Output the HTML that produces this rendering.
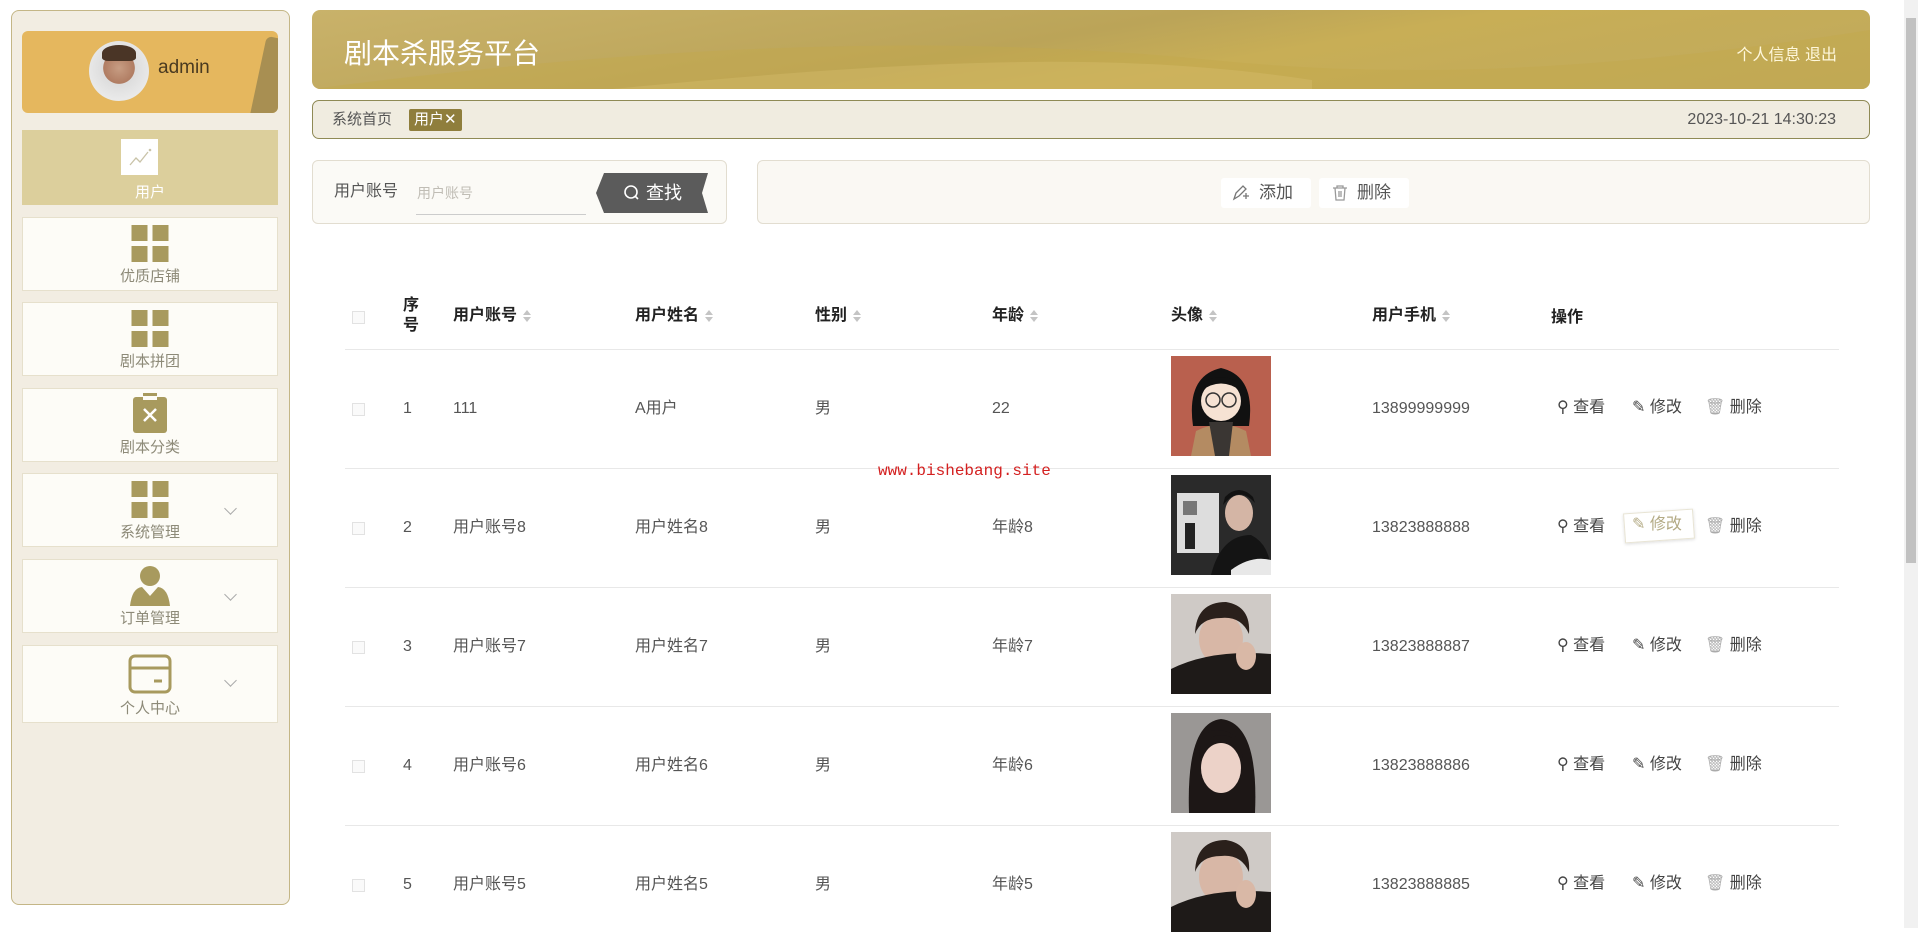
<!DOCTYPE html>
<html><head><meta charset="utf-8"><style>
*{box-sizing:border-box;margin:0;padding:0}
body{width:1918px;height:928px;overflow:hidden;background:#fff;font-family:"Liberation Sans","Noto Sans CJK SC",sans-serif;position:relative;color:#333}
.abs{position:absolute}
.side{left:11px;top:10px;width:279px;height:895px;background:#f2ede2;border:1px solid #c4b686;border-radius:8px}
.card{left:22px;top:31px;width:256px;height:82px;background:#e5b75e;border-radius:6px;overflow:hidden}
.menu{left:22px;width:256px;height:74px;background:#fdfcf7;border:1px solid #e6e0cc;text-align:center;color:#8d8a78;font-size:15px}
.menu .lbl{position:absolute;left:0;right:0;bottom:4px}
.menu .ic{position:absolute;left:50%;transform:translateX(-50%);top:7px}
.chev{position:absolute;right:42px;top:30px;width:9px;height:9px;border-right:1.3px solid #aaa;border-bottom:1.3px solid #aaa;transform:rotate(45deg)}
.hdr{left:312px;top:10px;width:1558px;height:79px;border-radius:8px;background:linear-gradient(170deg,#c9b26a 0%,#bba458 45%,#c8ae56 60%,#bfa95d 100%);overflow:hidden}
.bc{left:312px;top:100px;width:1558px;height:39px;border:1px solid #8f8a55;border-radius:7px;background:#f0ece0}
.sbox{left:312px;top:160px;width:415px;height:64px;border:1px solid #e2ddd0;border-radius:6px;background:#fbfaf6}
.abox{left:757px;top:160px;width:1113px;height:64px;border:1px solid #e2ddd0;border-radius:6px;background:#faf8f3}
.th{font-size:16px;font-weight:bold;color:#222;line-height:20px;top:306px}
.sort{display:inline-block;vertical-align:middle;margin-left:6px;width:8px;height:14px;position:relative}
.sort:before{content:"";position:absolute;left:0;top:1px;border:4px solid transparent;border-bottom:5px solid #c4c4c4;border-top:0}
.sort:after{content:"";position:absolute;left:0;top:8px;border:4px solid transparent;border-top:5px solid #c4c4c4;border-bottom:0}
.line{left:345px;width:1494px;height:1px;background:#e8e8e8}
.td{font-size:16px;color:#555;line-height:20px;height:20px}
.cb{width:13px;height:13px;border:1px solid #e2e2e2;background:#fafafa}
.op{font-size:16px;color:#444;line-height:20px;height:20px}
.hd{line-height:20px}
</style></head><body>
<div class="abs side"></div>
<div class="abs card">
 <div class="abs" style="left:235px;top:8px;width:40px;height:90px;background:#a88f52;transform:rotate(12deg);border-radius:6px"></div>
 <div class="abs" style="left:67px;top:10px;width:60px;height:60px;border-radius:50%;background:radial-gradient(circle at 50% 45%,#c79d83 0,#b07c62 35%,#ddd 36%,#e9e9e9 70%)"></div>
 <div class="abs" style="left:80px;top:14px;width:34px;height:16px;border-radius:50% 50% 20% 20%;background:#4a3526"></div>
 <div class="abs" style="left:136px;top:26px;font-size:19px;color:#4a3a20">admin</div>
</div>
<div class="abs" style="left:22px;top:130px;width:256px;height:75px;background:#dccf9c"></div>
<div class="abs" style="left:121px;top:139px;width:37px;height:36px;background:#fff"><svg width="37" height="36"><path d="M9 26 L15 19 L19 23 L27 13" stroke="#c9c3a8" stroke-width="1.3" fill="none"/><circle cx="29" cy="11" r="1.3" fill="#c9c3a8"/></svg></div>
<div class="abs" style="left:22px;top:181px;width:256px;text-align:center;color:#fff;font-size:15px">用户</div>

<div class="abs menu" style="top:217px"><svg class="ic" width="37" height="37"><rect x="0" y="0" width="16" height="16" fill="#a89a5e"/><rect x="21" y="0" width="16" height="16" fill="#a89a5e"/><rect x="0" y="21" width="16" height="16" fill="#a89a5e"/><rect x="21" y="21" width="16" height="16" fill="#a89a5e"/></svg><div class="lbl">优质店铺</div></div>
<div class="abs menu" style="top:302px"><svg class="ic" width="37" height="37"><rect x="0" y="0" width="16" height="16" fill="#a89a5e"/><rect x="21" y="0" width="16" height="16" fill="#a89a5e"/><rect x="0" y="21" width="16" height="16" fill="#a89a5e"/><rect x="21" y="21" width="16" height="16" fill="#a89a5e"/></svg><div class="lbl">剧本拼团</div></div>
<div class="abs menu" style="top:388px"><svg class="ic" width="34" height="40" style="top:4px"><rect x="10" y="0" width="14" height="6" fill="#a89a5e"/><rect x="0" y="4" width="34" height="36" rx="3" fill="#a89a5e"/><rect x="10" y="3" width="14" height="4" fill="#fdfcf7"/><path d="M11 16 L23 28 M23 16 L11 28" stroke="#fff" stroke-width="2.5"/></svg><div class="lbl">剧本分类</div></div>
<div class="abs menu" style="top:473px"><svg class="ic" width="37" height="37"><rect x="0" y="0" width="16" height="16" fill="#a89a5e"/><rect x="21" y="0" width="16" height="16" fill="#a89a5e"/><rect x="0" y="21" width="16" height="16" fill="#a89a5e"/><rect x="21" y="21" width="16" height="16" fill="#a89a5e"/></svg><div class="lbl">系统管理</div><div class="chev"></div></div>
<div class="abs menu" style="top:559px"><svg class="ic" width="40" height="40" style="top:6px"><circle cx="20" cy="10" r="10" fill="#a89a5e"/><path d="M0 40 Q2 22 12 21 L20 30 L28 21 Q38 22 40 40 Z" fill="#a89a5e"/></svg><div class="lbl">订单管理</div><div class="chev"></div></div>
<div class="abs menu" style="top:645px;height:78px"><svg class="ic" width="44" height="40" style="top:8px"><rect x="2" y="2" width="40" height="36" rx="5" fill="none" stroke="#a89a5e" stroke-width="3"/><line x1="2" y1="14" x2="42" y2="14" stroke="#a89a5e" stroke-width="3"/><line x1="26" y1="27" x2="34" y2="27" stroke="#a89a5e" stroke-width="3"/></svg><div class="lbl">个人中心</div><div class="chev"></div></div>

<div class="abs hdr">
 <svg class="abs" style="left:0;top:0" width="1558" height="79"><path d="M0 79 C300 40 600 20 900 50 C1100 70 1300 60 1558 20 L1558 79 Z" fill="#c3a84c" opacity=".45"/><path d="M300 79 C600 50 800 40 1000 70 L1000 79 Z" fill="#d6bf6e" opacity=".4"/></svg>
 <div class="abs" style="left:32px;top:22px;font-size:28px;color:#fff">剧本杀服务平台</div>
 <div class="abs" style="right:33px;top:31px;font-size:16px;color:#fff8dc">个人信息 退出</div>
</div>
<div class="abs bc">
 <div class="abs hd" style="left:19px;top:9px;font-size:15px;color:#555">系统首页</div>
 <div class="abs" style="left:96px;top:8px;height:22px;padding:0 5px;background:#8f7e3c;color:#fff;font-size:15px;line-height:22px;border-radius:2px">用户✕</div>
 <div class="abs hd" style="right:33px;top:9px;font-size:16px;color:#555">2023-10-21 14:30:23</div>
</div>
<div class="abs sbox">
 <div class="abs hd" style="left:21px;top:21px;font-size:16px;color:#555">用户账号</div>
 <div class="abs hd" style="left:104px;top:22px;font-size:14px;color:#c0bdb5">用户账号</div>
 <div class="abs" style="left:103px;top:53px;width:170px;height:1px;background:#ccc"></div>
 <svg class="abs" style="left:283px;top:12px" width="112" height="40"><path d="M8 0 H112 L106 20 L112 40 H8 L0 20 Z" fill="#5b5b5b"/><circle cx="35" cy="19" r="6" stroke="#fff" stroke-width="1.6" fill="none"/><line x1="39" y1="23" x2="42" y2="26" stroke="#fff" stroke-width="1.6"/><text x="50" y="26" fill="#fff" font-size="18" font-family="Liberation Sans,Noto Sans CJK SC,sans-serif">查找</text></svg>
</div>
<div class="abs abox">
 <div class="abs" style="left:463px;top:17px;width:90px;height:30px;background:#fff;border-radius:3px;font-size:17px;color:#555;line-height:30px;padding-left:38px">添加</div>
 <svg class="abs" style="left:474px;top:24px" width="18" height="16"><path d="M2 14 L4 8 L11 1 L14 4 L7 11 Z" stroke="#777" stroke-width="1.3" fill="none"/><path d="M11 11 H17 M14 8 V14" stroke="#777" stroke-width="1.3"/></svg>
 <div class="abs" style="left:561px;top:17px;width:90px;height:30px;background:#fff;border-radius:3px;font-size:17px;color:#555;line-height:30px;padding-left:38px">删除</div>
 <svg class="abs" style="left:574px;top:23px" width="16" height="18"><path d="M1 4 H15 M5 4 V2 H11 V4 M3 4 L4 16 H12 L13 4 M7 7 V13 M9 7 V13" stroke="#999" stroke-width="1.3" fill="none"/></svg>
</div>

<div class="abs cb" style="left:352px;top:311px"></div>
<div class="abs th" style="left:403px;top:296px">序<br>号</div>
<div class="abs th" style="left:453px">用户账号<span class="sort"></span></div>
<div class="abs th" style="left:635px">用户姓名<span class="sort"></span></div>
<div class="abs th" style="left:815px">性别<span class="sort"></span></div>
<div class="abs th" style="left:992px">年龄<span class="sort"></span></div>
<div class="abs th" style="left:1171px">头像<span class="sort"></span></div>
<div class="abs th" style="left:1372px">用户手机<span class="sort"></span></div>
<div class="abs th" style="left:1551px;top:308px">操作</div>
<div class="abs line" style="top:349px"></div>

<div class="abs line" style="top:468px"></div>
<div class="abs line" style="top:587px"></div>
<div class="abs line" style="top:706px"></div>
<div class="abs line" style="top:825px"></div>

<!-- row 1 -->
<div class="abs cb" style="left:352px;top:403px"></div>
<div class="abs td" style="left:403px;top:399px">1</div>
<div class="abs td" style="left:453px;top:399px">111</div>
<div class="abs td" style="left:635px;top:399px">A用户</div>
<div class="abs td" style="left:815px;top:399px">男</div>
<div class="abs td" style="left:992px;top:399px">22</div>
<div class="abs td" style="left:1372px;top:399px">13899999999</div>
<svg class="abs" style="left:1171px;top:356px" width="100" height="100"><rect width="100" height="100" fill="#b9604e"/><path d="M22 70 Q15 20 50 12 Q85 20 78 70 Z" fill="#111"/><ellipse cx="50" cy="45" rx="20" ry="20" fill="#f6e2d3"/><path d="M30 35 Q50 20 70 35 L70 28 Q50 14 30 28Z" fill="#111"/><circle cx="42" cy="44" r="7" fill="none" stroke="#333" stroke-width="1.5"/><circle cx="58" cy="44" r="7" fill="none" stroke="#333" stroke-width="1.5"/><path d="M20 100 L25 75 Q50 62 75 75 L80 100Z" fill="#b48b62"/><path d="M38 66 H62 L58 100 H44Z" fill="#3a3633"/></svg>
<div class="abs op" style="left:1557px;top:398px">⚲ 查看</div>
<div class="abs op" style="left:1632px;top:398px">✎ 修改</div>
<div class="abs op" style="left:1705px;top:398px"><span style="color:#aaa">🗑</span> 删除</div>

<!-- row 2 -->
<div class="abs cb" style="left:352px;top:522px"></div>
<div class="abs td" style="left:403px;top:518px">2</div>
<div class="abs td" style="left:453px;top:518px">用户账号8</div>
<div class="abs td" style="left:635px;top:518px">用户姓名8</div>
<div class="abs td" style="left:815px;top:518px">男</div>
<div class="abs td" style="left:992px;top:518px">年龄8</div>
<div class="abs td" style="left:1372px;top:518px">13823888888</div>
<svg class="abs" style="left:1171px;top:475px" width="100" height="100"><rect width="100" height="100" fill="#2a2a2a"/><rect x="6" y="18" width="42" height="60" fill="#ddd"/><rect x="12" y="26" width="14" height="14" fill="#777"/><rect x="14" y="48" width="10" height="26" fill="#222"/><ellipse cx="68" cy="38" rx="14" ry="18" fill="#d4b5a5"/><path d="M52 30 Q68 10 84 28 L82 22 Q68 8 54 22Z" fill="#111"/><path d="M40 100 Q50 60 80 60 Q100 70 100 100Z" fill="#141414"/><path d="M60 95 Q80 80 100 85 L100 100 H60Z" fill="#e8e8e8"/></svg>
<div class="abs op" style="left:1557px;top:517px">⚲ 查看</div>
<div class="abs" style="left:1624px;top:511px;width:70px;height:30px;border:1px solid #e8e4d4;background:#fff;transform:rotate(-4deg);box-shadow:0 1px 3px #ddd"></div>
<div class="abs op" style="left:1632px;top:515px;color:#b3aa84">✎ 修改</div>
<div class="abs op" style="left:1705px;top:517px"><span style="color:#aaa">🗑</span> 删除</div>

<!-- row 3 -->
<div class="abs cb" style="left:352px;top:641px"></div>
<div class="abs td" style="left:403px;top:637px">3</div>
<div class="abs td" style="left:453px;top:637px">用户账号7</div>
<div class="abs td" style="left:635px;top:637px">用户姓名7</div>
<div class="abs td" style="left:815px;top:637px">男</div>
<div class="abs td" style="left:992px;top:637px">年龄7</div>
<div class="abs td" style="left:1372px;top:637px">13823888887</div>
<svg class="abs" style="left:1171px;top:594px" width="100" height="100"><rect width="100" height="100" fill="#cfcac6"/><ellipse cx="50" cy="45" rx="22" ry="26" fill="#d8b7a6"/><path d="M24 40 Q25 8 55 8 Q80 12 78 40 Q70 22 50 24 Q30 24 24 40Z" fill="#2a201b"/><path d="M0 100 L0 75 Q40 55 100 60 L100 100Z" fill="#1e1a18"/><ellipse cx="75" cy="62" rx="10" ry="14" fill="#d9b8a6"/></svg>
<div class="abs op" style="left:1557px;top:636px">⚲ 查看</div>
<div class="abs op" style="left:1632px;top:636px">✎ 修改</div>
<div class="abs op" style="left:1705px;top:636px"><span style="color:#aaa">🗑</span> 删除</div>

<!-- row 4 -->
<div class="abs cb" style="left:352px;top:760px"></div>
<div class="abs td" style="left:403px;top:756px">4</div>
<div class="abs td" style="left:453px;top:756px">用户账号6</div>
<div class="abs td" style="left:635px;top:756px">用户姓名6</div>
<div class="abs td" style="left:815px;top:756px">男</div>
<div class="abs td" style="left:992px;top:756px">年龄6</div>
<div class="abs td" style="left:1372px;top:756px">13823888886</div>
<svg class="abs" style="left:1171px;top:713px" width="100" height="100"><rect width="100" height="100" fill="#9a9795"/><path d="M18 100 Q15 10 50 6 Q88 10 84 100Z" fill="#1d1716"/><ellipse cx="50" cy="55" rx="20" ry="25" fill="#ecd2c8"/><path d="M28 45 Q35 22 50 22 Q68 22 72 45 L72 32 Q60 14 40 18 Q28 26 28 45Z" fill="#1d1716"/></svg>
<div class="abs op" style="left:1557px;top:755px">⚲ 查看</div>
<div class="abs op" style="left:1632px;top:755px">✎ 修改</div>
<div class="abs op" style="left:1705px;top:755px"><span style="color:#aaa">🗑</span> 删除</div>

<!-- row 5 -->
<div class="abs cb" style="left:352px;top:879px"></div>
<div class="abs td" style="left:403px;top:875px">5</div>
<div class="abs td" style="left:453px;top:875px">用户账号5</div>
<div class="abs td" style="left:635px;top:875px">用户姓名5</div>
<div class="abs td" style="left:815px;top:875px">男</div>
<div class="abs td" style="left:992px;top:875px">年龄5</div>
<div class="abs td" style="left:1372px;top:875px">13823888885</div>
<svg class="abs" style="left:1171px;top:832px" width="100" height="100"><rect width="100" height="100" fill="#cfcac6"/><ellipse cx="50" cy="45" rx="22" ry="26" fill="#d8b7a6"/><path d="M24 40 Q25 8 55 8 Q80 12 78 40 Q70 22 50 24 Q30 24 24 40Z" fill="#2a201b"/><path d="M0 100 L0 75 Q40 55 100 60 L100 100Z" fill="#1e1a18"/><ellipse cx="75" cy="62" rx="10" ry="14" fill="#d9b8a6"/></svg>
<div class="abs op" style="left:1557px;top:874px">⚲ 查看</div>
<div class="abs op" style="left:1632px;top:874px">✎ 修改</div>
<div class="abs op" style="left:1705px;top:874px"><span style="color:#aaa">🗑</span> 删除</div>

<div class="abs" style="left:878px;top:462px;font-family:'Liberation Mono',monospace;font-size:16px;color:#d42020">www.bishebang.site</div>

<div class="abs" style="left:1904px;top:0;width:14px;height:928px;background:#f1f1f1"></div>
<div class="abs" style="left:1906px;top:18px;width:10px;height:545px;background:#c1c1c1"></div>
</body></html>
